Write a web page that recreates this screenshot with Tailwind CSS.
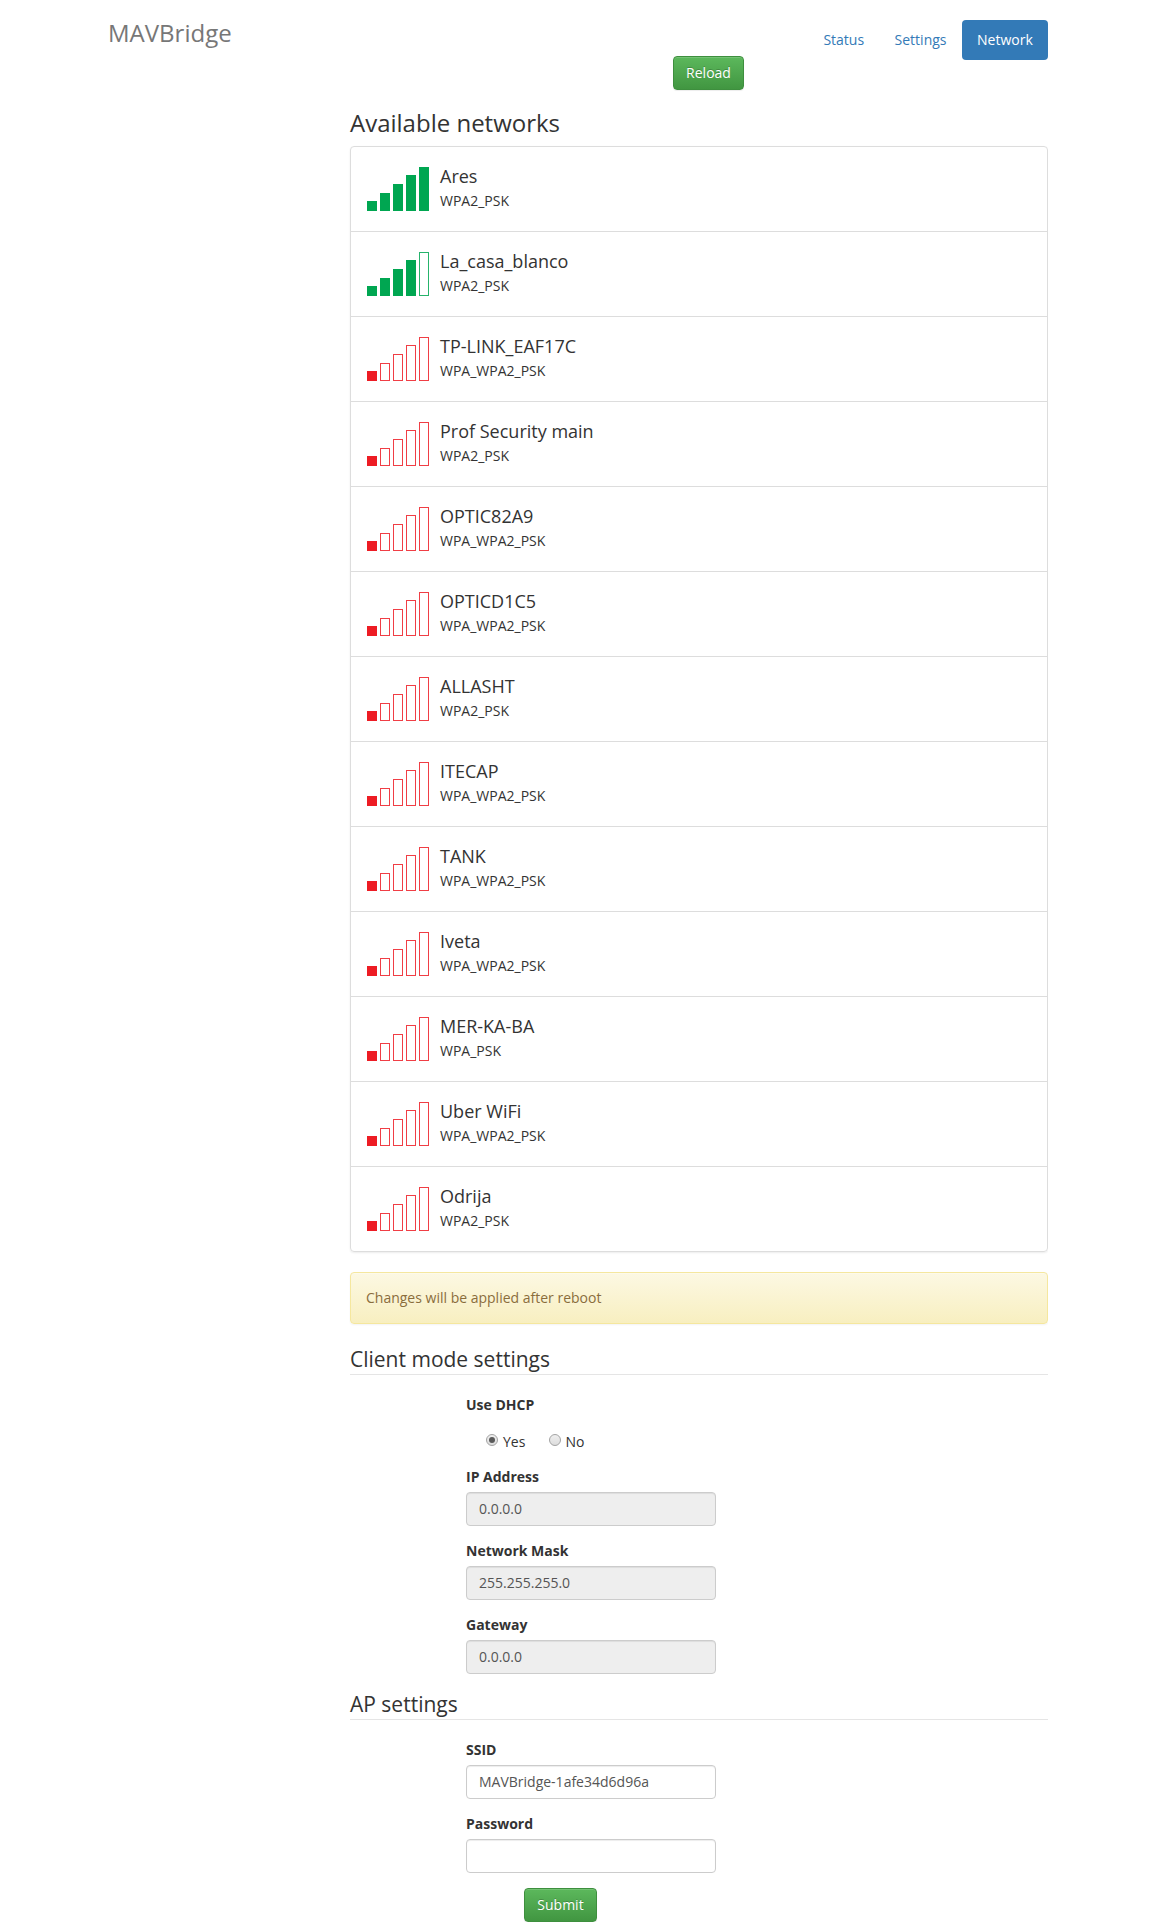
<!DOCTYPE html>
<html lang="en">
<head>
<meta charset="utf-8">
<title>MAVBridge</title>
<script src="https://cdn.jsdelivr.net/npm/@tailwindcss/browser@4"></script>
</head>
<body class="bg-white font-['Open_Sans',sans-serif] text-[14px] leading-5 text-[#333]">
<div class="ml-[108px] w-[940px] h-[1922px] overflow-hidden pt-5">
  <header class="flex justify-between items-start h-9">
    <h3 class="text-[24px] leading-[26.4px] text-[#777]">MAVBridge</h3>
    <nav class="flex gap-[0.5px] text-[#337ab7]">
      <a class="px-[15px] py-2.5">Status</a>
      <a class="px-[15px] py-2.5">Settings</a>
      <a class="w-[86px] pl-[15px] py-2.5 rounded bg-[#337ab7] text-white">Network</a>
    </nav>
  </header>
  <main class="ml-[242px] w-[698px]">
    <button class="block ml-[323px] w-[71px] h-[34px] rounded border border-[#3e8f3e] bg-linear-to-b from-[#5cb85c] to-[#419641] text-white [text-shadow:0_-1px_0_rgba(0,0,0,.2)] shadow-[inset_0_1px_0_rgba(255,255,255,.15),0_1px_1px_rgba(0,0,0,.075)]">Reload</button>
    <h3 class="mt-[19.6px] mb-2.5 text-[24px] leading-[26.4px]">Available networks</h3>
    <ul id="networks" class="rounded border border-[#ddd] divide-y divide-[#ddd] shadow-[0_1px_2px_rgba(0,0,0,.075)]"></ul>
    <div class="mt-5 h-[52px] px-[15px] py-[15px] rounded border border-[#f5e79e] bg-linear-to-b from-[#fcf8e3] to-[#f8efc0] text-[#8a6d3b] [text-shadow:0_1px_0_rgba(255,255,255,.2)] shadow-[inset_0_1px_0_rgba(255,255,255,.25),0_1px_2px_rgba(0,0,0,.05)]">Changes will be applied after reboot</div>
    <form>
      <h4 class="mt-5 mb-5 h-[31px] border-b border-[#e5e5e5] text-[21px] leading-[30px]">Client mode settings</h4>
      <div class="ml-[116px] w-[250px]">
        <p class="font-bold">Use DHCP</p>
        <div class="mt-[17px] mb-[15px] ml-5 flex gap-6">
          <label class="flex gap-[5px]">
            <svg class="mt-0.5 size-3" viewBox="0 0 12 12"><circle cx="6" cy="6" r="5.5" fill="url(#knob)" stroke="#a3a3a3"/><circle cx="6" cy="6" r="3" fill="#5a5a5a"/></svg>Yes</label>
          <label class="flex gap-1">
            <svg class="mt-0.5 size-3" viewBox="0 0 12 12"><circle cx="6" cy="6" r="5.5" fill="url(#knob)" stroke="#a3a3a3"/></svg>No</label>
        </div>
        <label class="block mb-[15px] font-bold">IP Address
          <input disabled value="0.0.0.0" class="block mt-[5px] w-full h-[34px] pb-0.5 px-3 rounded border border-[#ccc] bg-[#eee] font-normal text-[#555] shadow-[inset_0_1px_1px_rgba(0,0,0,.075)]"></label>
        <label class="block mb-[15px] font-bold">Network Mask
          <input disabled value="255.255.255.0" class="block mt-[5px] w-full h-[34px] pb-0.5 px-3 rounded border border-[#ccc] bg-[#eee] font-normal text-[#555] shadow-[inset_0_1px_1px_rgba(0,0,0,.075)]"></label>
        <label class="block mb-[15px] font-bold">Gateway
          <input disabled value="0.0.0.0" class="block mt-[5px] w-full h-[34px] pb-0.5 px-3 rounded border border-[#ccc] bg-[#eee] font-normal text-[#555] shadow-[inset_0_1px_1px_rgba(0,0,0,.075)]"></label>
      </div>
      <h4 class="mb-5 h-[31px] border-b border-[#e5e5e5] text-[21px] leading-[30px]">AP settings</h4>
      <div class="ml-[116px] w-[250px]">
        <label class="block mb-[15px] font-bold">SSID
          <input value="MAVBridge-1afe34d6d96a" class="block mt-[5px] w-full h-[34px] pb-0.5 px-3 rounded border border-[#ccc] bg-white font-normal text-[#555] shadow-[inset_0_1px_1px_rgba(0,0,0,.075)]"></label>
        <label class="block mb-[15px] font-bold">Password
          <input type="password" class="block mt-[5px] w-full h-[34px] px-3 rounded border border-[#ccc] bg-white font-normal text-[#555] shadow-[inset_0_1px_1px_rgba(0,0,0,.075)]"></label>
      </div>
      <button type="button" class="block ml-[174px] w-[73px] h-[34px] rounded border border-[#3e8f3e] bg-linear-to-b from-[#5cb85c] to-[#419641] text-white [text-shadow:0_-1px_0_rgba(0,0,0,.2)] shadow-[inset_0_1px_0_rgba(255,255,255,.15),0_1px_1px_rgba(0,0,0,.075)]">Submit</button>
    </form>
  </main>
</div>
<svg class="absolute size-0"><defs><linearGradient id="knob" x1="0" y1="0" x2="0" y2="1"><stop offset="0" stop-color="#f0f0f0"/><stop offset="1" stop-color="#dcdcdc"/></linearGradient></defs></svg>
<script>
const networks = [
  ['Ares', 'WPA2_PSK', 5], ['La_casa_blanco', 'WPA2_PSK', 4], ['TP-LINK_EAF17C', 'WPA_WPA2_PSK', 1],
  ['Prof Security main', 'WPA2_PSK', 1], ['OPTIC82A9', 'WPA_WPA2_PSK', 1], ['OPTICD1C5', 'WPA_WPA2_PSK', 1],
  ['ALLASHT', 'WPA2_PSK', 1], ['ITECAP', 'WPA_WPA2_PSK', 1], ['TANK', 'WPA_WPA2_PSK', 1],
  ['Iveta', 'WPA_WPA2_PSK', 1], ['MER-KA-BA', 'WPA_PSK', 1], ['Uber WiFi', 'WPA_WPA2_PSK', 1], ['Odrija', 'WPA2_PSK', 1]
];
const heights = [10, 18, 27, 36, 44];
document.getElementById('networks').innerHTML = networks.map(([name, auth, level]) => {
  const color = level > 3 ? '#00a651' : '#ed1c24';
  const bars = heights.map((h, i) =>
    `<rect x="${i * 13 + .5}" y="${44.5 - h}" width="9" height="${h - 1}" fill="${i < level ? color : 'none'}" stroke="${color}" stroke-opacity="${i < level ? 1 : .85}"/>`).join('');
  return `<li class="flex h-[85px] last:h-[84px] pl-4 pt-5">
    <svg class="w-[62px] h-11 mr-[11px]" viewBox="0 0 62 44">${bars}</svg>
    <div class="-mt-px"><h4 class="text-[18px] leading-5 mb-[5px]">${name}</h4><p>${auth}</p></div></li>`;
}).join('');
</script>
</body>
</html>
